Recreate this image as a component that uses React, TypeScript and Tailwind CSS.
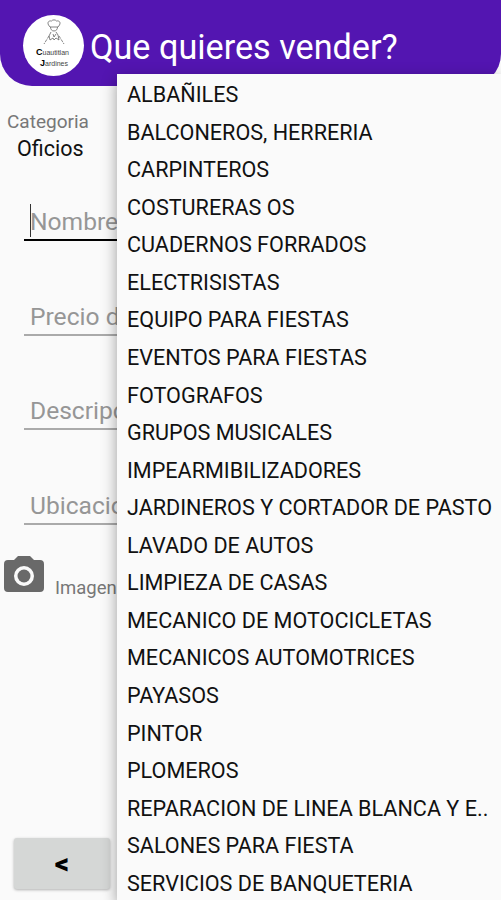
import React from 'react';
import { clsx } from 'clsx';

const categories = [
  'ALBAÑILES',
  'BALCONEROS, HERRERIA',
  'CARPINTEROS',
  'COSTURERAS OS',
  'CUADERNOS FORRADOS',
  'ELECTRISISTAS',
  'EQUIPO PARA FIESTAS',
  'EVENTOS PARA FIESTAS',
  'FOTOGRAFOS',
  'GRUPOS MUSICALES',
  'IMPEARMIBILIZADORES',
  'JARDINEROS Y CORTADOR DE PASTO',
  'LAVADO DE AUTOS',
  'LIMPIEZA DE CASAS',
  'MECANICO DE MOTOCICLETAS',
  'MECANICOS AUTOMOTRICES',
  'PAYASOS',
  'PINTOR',
  'PLOMEROS',
  'REPARACION DE LINEA BLANCA Y E..',
  'SALONES PARA FIESTA',
  'SERVICIOS DE BANQUETERIA',
];

const fields = [
  { label: 'Nombre', focused: true },
  { label: 'Precio d', focused: false },
  { label: 'Descripc', focused: false },
  { label: 'Ubicacio', focused: false },
];

function Logo() {
  return (
    <div className="flex h-[61px] w-[61px] shrink-0 flex-col items-center rounded-full bg-white pt-[4px] text-[#444]">
      <svg viewBox="0 0 24 28" className="h-7 w-6" fill="none" stroke="#666" strokeWidth="0.8">
        <path d="M8 8 6.500 6C5 3 7 1.500 9.500 2c1-1.500 4-1.500 5 0C17 1.500 19 3 17.500 6L16 8Z" />
        <path d="M8.500 8c0 2 1 4 3.500 4s3.500-2 3.500-4" />
        <path d="m9 13-2 4 1 4 3-2 1 2 2-2 3 2-1-5-2-3M11 15l1 3 2-3" />
        <path d="m7 17-5 8M17 17l5 8" strokeDasharray="3 1" />
      </svg>
      <div className="w-[35px] font-['Liberation_Sans',sans-serif] text-[7px] leading-[10px] whitespace-nowrap">
        <p><b className="text-[9px] text-black">C</b>uautitlan</p>
        <p className="pl-1"><b className="text-[9px] text-black">J</b>ardines</p>
      </div>
    </div>
  );
}

function Header() {
  return (
    <header className="flex h-[86px] items-start rounded-b-[32px] bg-[#5315b1] pt-[15px] pl-[23px]">
      <Logo />
      <h1 className="ml-[6px] pt-[12px] text-[34.200px] leading-[40px] whitespace-nowrap text-white">
        Que quieres vender?
      </h1>
    </header>
  );
}

function Field({ label, focused }: { label: string; focused: boolean }) {
  return (
    <div
      className={clsx(
        'mb-[57.500px] ml-6 flex h-[37px] items-start pl-[6px] text-[24.600px] leading-[36px] text-[#969696]',
        focused ? 'border-b-2 border-black' : 'border-b-2 border-[#aaa]'
      )}
    >
      {focused && <span className="-mr-px h-[33px] w-px shrink-0 bg-[#333]" />}
      <span className="whitespace-nowrap">{label}</span>
    </div>
  );
}

function CategoryMenu() {
  return (
    <ul className="absolute top-[74px] right-0 bottom-0 left-[117px] overflow-hidden bg-[#fafafa] pt-px pl-[10px] text-[21.600px] text-[#111] shadow-[0_5px_14px_rgba(0,0,0,0.38)]">
      {categories.map((name) => (
        <li key={name} className="h-[37.570px] leading-[40px] whitespace-nowrap">
          {name}
        </li>
      ))}
    </ul>
  );
}

export default function App() {
  return (
    <div className="relative h-[900px] w-full overflow-hidden bg-[#fafafa] font-['Roboto',sans-serif]">
      <Header />

      <main className="flex h-[814px] flex-col">
        <p className="mt-6 ml-[7px] text-[19px] leading-[24px] text-[#777]">Categoria</p>
        <p className="ml-[17px] text-[21.500px] leading-[30px] text-[#111]">Oficios</p>

        <div className="mt-[40px]">
          {fields.map((field) => (
            <Field key={field.label} label={field.label} focused={field.focused} />
          ))}
        </div>

        <div className="-mt-[26px] flex h-[50px] items-start">
          <svg viewBox="0 0 40 36" className="ml-1 h-9 w-10" fill="#696969">
            <path
              fillRule="evenodd"
              d="M14 0h12l4 4h6a4 4 0 0 1 4 4v24a4 4 0 0 1-4 4H4a4 4 0 0 1-4-4V8a4 4 0 0 1 4-4h6ZM20 10a10 10 0 1 0 0 20 10 10 0 0 0 0-20Z"
            />
            <circle cx="20" cy="20" r="6.500" />
          </svg>
          <span className="mt-5 ml-[11px] text-[18.500px] leading-[24px] text-[#777]">Imagen</span>
        </div>

        <button className="mt-auto mb-[11px] ml-[14px] flex h-[51px] w-[96px] items-center justify-center rounded-[3px] bg-[#d5d7d6] text-[28px] font-black text-black shadow-[0_1px_3px_rgba(0,0,0,0.3)]">
          &lt;
        </button>
      </main>

      <CategoryMenu />
    </div>
  );
}
